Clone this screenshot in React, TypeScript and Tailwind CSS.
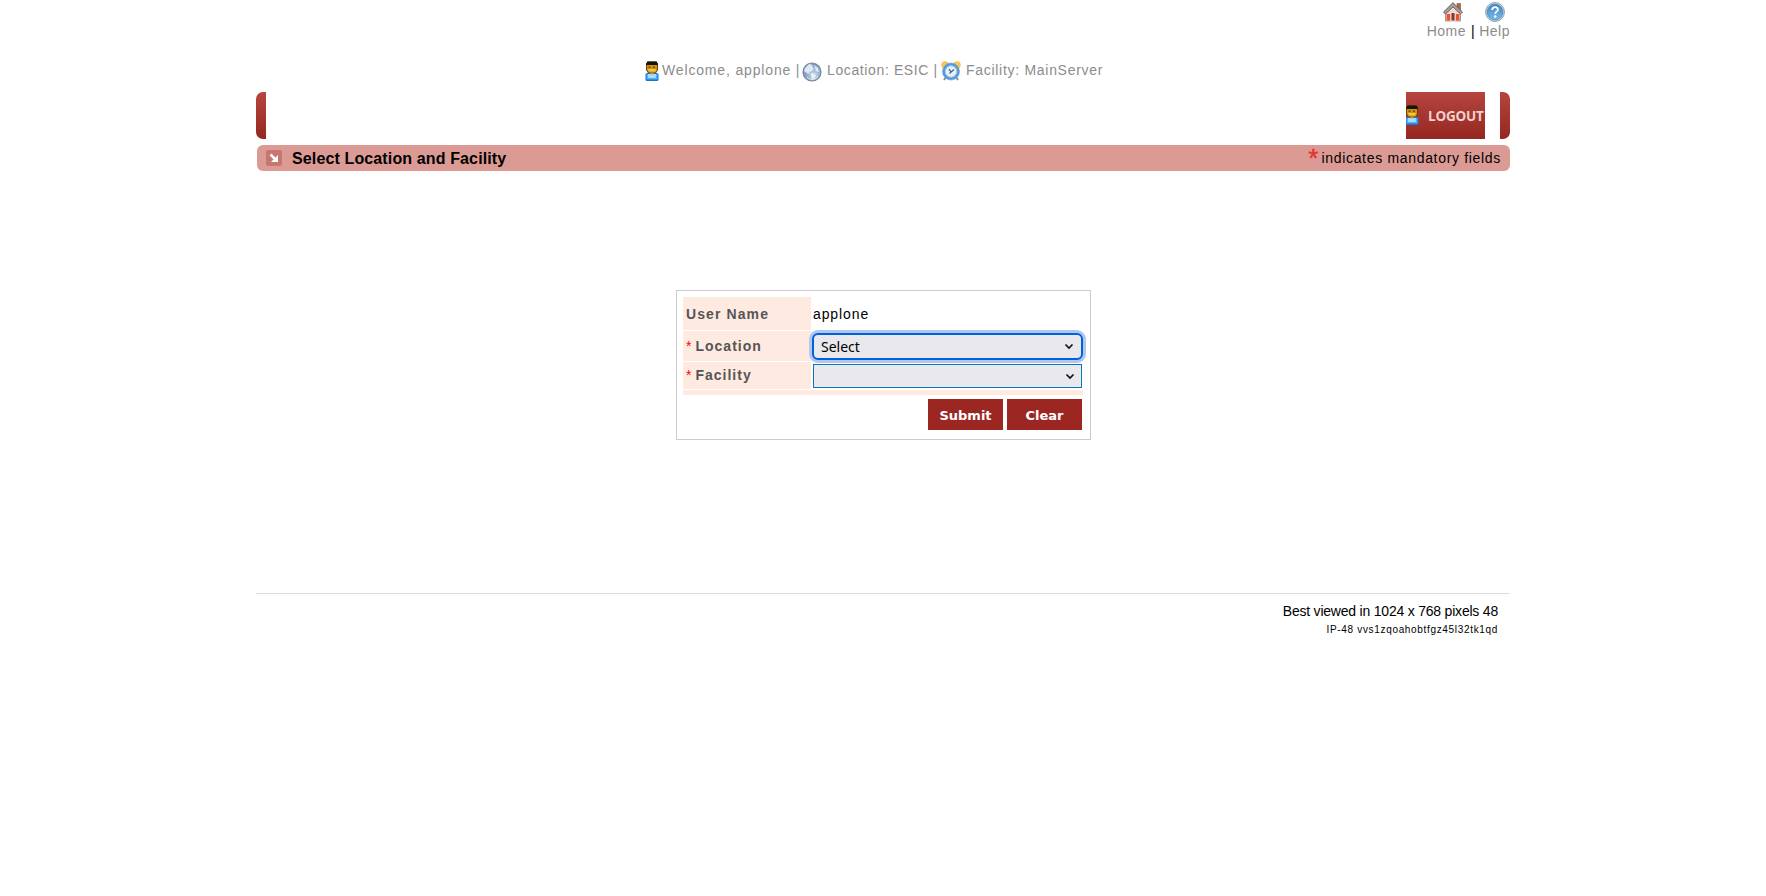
import React from 'react';

function UserIcon() {
  return (
    <svg width="14" height="20" viewBox="0 0 14 20" className="shrink-0">
      <path d="M1 3 2.500 .5h9L13 3v6l-2 3H3L1 9Z" fill="#6a4300" />
      <path d="M1 3 2.500 .5h9L13 3v1H1Z" fill="#171208" />
      <path d="M2 4h10v5l-1.500 2.500h-7L2 9Z" fill="#cf9210" />
      <path d="M3.500 5.500h2V7h-2ZM8 5.500h2V7H8Z" fill="#7d4e00" />
      <path d="M3 8h7.500v2.500H4Z" fill="#f9c63c" />
      <path d="M.5 13 2 12h10l1.500 1v6l-1 1h-11l-1-1Z" fill="#1675d3" />
      <path d="M1.500 13h11v5.500h-11Z" fill="#4dafff" />
      <path d="M3 13h8v4H3Z" fill="#a8dcff" />
      <path d="M5 11.500h4L7 14Z" fill="#d89b12" />
    </svg>
  );
}

function HomeIcon() {
  return (
    <svg width="20" height="20" viewBox="0 0 20 20">
      <path d="M2.500 10h15v9h-15Z" fill="#eeeae8" stroke="#8c8481" strokeWidth=".8" />
      <path d="M14 1.500h3.500V8L14 5Z" fill="#b5634e" stroke="#73514a" strokeWidth=".6" />
      <path d="m10 .7 9.500 9.300-2 2L10 5l-7.500 7-2-2Z" fill="#a99b96" stroke="#6d5f5a" strokeWidth="1" />
      <path d="m10 6 5.500 5v1h-11v-1Z" fill="#e8d8d2" />
      <path d="M3.500 12h4v6.500h-4ZM12.500 12h4v6.500h-4Z" fill="#ea5332" />
      <path d="M8 10.500h4V19H8Z" fill="#84382a" stroke="#fff" strokeWidth=".8" />
    </svg>
  );
}

function HelpIcon() {
  return (
    <svg width="20" height="20" viewBox="0 0 20 20">
      <defs>
        <linearGradient id="help" x2="0" y2="1">
          <stop stopColor="#4183bd" />
          <stop offset="1" stopColor="#79bcef" />
        </linearGradient>
      </defs>
      <circle cx="10" cy="10" r="9.400" fill="#c9d9e7" stroke="#7f9cb8" strokeWidth="1" />
      <circle cx="10" cy="10" r="7.800" fill="url(#help)" stroke="#4b7ca8" strokeWidth=".7" />
      <path d="M7.200 8c0-3.700 5.700-3.600 5.700-.4 0 2.100-2.700 2-2.700 4.200" fill="none" stroke="#fff" strokeWidth="1.800" />
      <circle cx="10.200" cy="14.500" r="1.200" fill="#fff" />
    </svg>
  );
}

function GlobeIcon() {
  return (
    <svg width="20" height="20" viewBox="0 0 20 20" className="mt-px shrink-0">
      <defs>
        <radialGradient id="globe" cx=".6" cy=".65" r=".65">
          <stop stopColor="#c5daf0" />
          <stop offset="1" stopColor="#7090b8" />
        </radialGradient>
      </defs>
      <circle cx="10" cy="10" r="9" fill="url(#globe)" stroke="#74879f" strokeWidth="1.200" />
      <path d="M3 6 7 2l4 1-1 2 2 1-2 3-3 1 1 2-3-1-3-2ZM12 3l4 3 1 4-3-1-1-3ZM9 11l4 1 1 2-3 4-2-3Z" fill="#eef4fa" opacity=".85" />
      <path d="M5 15.500c3 2.500 8 2.500 11-1" fill="none" stroke="#fff" opacity=".7" />
    </svg>
  );
}

function ClockIcon() {
  return (
    <svg width="20" height="20" viewBox="0 0 20 20" className="shrink-0">
      <path d="m5 16-2 3M15 16l2 3" stroke="#8b8e98" strokeWidth="2" />
      <circle cx="4" cy="4" r="3.400" fill="#ffc947" stroke="#eeb24a" strokeWidth=".6" />
      <circle cx="16" cy="4" r="3.400" fill="#ffc947" stroke="#eeb24a" strokeWidth=".6" />
      <circle cx="10" cy="10.500" r="8.500" fill="#5599dc" stroke="#6fa5d8" strokeWidth=".7" />
      <circle cx="10" cy="10.500" r="5.700" fill="#e5f1fc" stroke="#a7cbed" />
      <path d="m8 8 2 3 3-2.500M10 11l-1.500 1.500" fill="none" stroke="#53606e" strokeWidth="1.300" />
    </svg>
  );
}

function Chevron() {
  return (
    <svg width="10" height="7" viewBox="0 0 10 7">
      <path d="m1.500 1.500 3.500 3.500 3.500-3.500" fill="none" stroke="#111" strokeWidth="1.700" />
    </svg>
  );
}

export default function App() {
  return (
    <div className="min-h-[896px] bg-white font-['Liberation_Sans',sans-serif] text-black">
      <div className="mx-auto w-[1254px]">
        <header className="flex h-[92px] flex-col">
          <div className="flex h-[50px] justify-end gap-[5px] pt-[2px] text-[14px] leading-[18px] tracking-[0.5px] text-[#8c8c8c]">
            <a className="flex flex-col items-center">
              <span className="ml-[13px]"><HomeIcon /></span>
              <span>Home</span>
            </a>
            <span className="pt-[20px] text-black">|</span>
            <a className="-ml-px flex flex-col items-center">
              <HelpIcon />
              <span>Help</span>
            </a>
          </div>
          <div className="flex h-[41px] items-start pt-[11px] pl-[389px] text-[14px] leading-[18px] tracking-[0.71px] whitespace-nowrap text-[#8c8c8c]">
            <UserIcon />
            <span className="ml-[3px] w-[141px] tracking-[0.84px]">Welcome, applone |</span>
            <span className="-ml-px flex"><GlobeIcon /></span>
            <span className="ml-[5px] w-[114px] tracking-[0.62px]">Location: ESIC |</span>
            <ClockIcon />
            <span className="ml-[5px]">Facility: MainServer</span>
          </div>
        </header>

        <nav className="flex h-[47px] justify-between">
          <div className="w-[10px] rounded-l-[7px] bg-linear-to-b from-[#b5453e] to-[#962621]" />
          <div className="flex gap-[15px]">
            <button className="flex w-[79px] items-center overflow-hidden bg-linear-to-b from-[#b5453e] to-[#962621] font-['Open_Sans',sans-serif] text-[13.5px] font-bold tracking-[-0.2px] text-[#f0d3cf]">
              <span className="-mt-px -ml-px flex shrink-0"><UserIcon /></span>
              <span className="mt-px ml-[9px]">LOGOUT</span>
            </button>
            <div className="w-[10px] rounded-r-[7px] bg-linear-to-b from-[#b5453e] to-[#962621]" />
          </div>
        </nav>

        <div className="mt-[6px] ml-px flex h-[26px] items-center rounded-[6px] bg-[#dc9a94] pr-[9px] pl-[9px]">
          <svg width="16" height="16" viewBox="0 0 16 16">
            <rect width="16" height="16" rx="2" fill="#c77670" />
            <path d="m4 4.500 6 6M12 5v7H5l2.500-2.500 2-2Z" fill="#fff" />
            <path d="m4.500 4.500 5 5" stroke="#fff" strokeWidth="2.500" />
          </svg>
          <h1 className="mt-px ml-[10px] text-[16px] font-bold tracking-[0.13px]">Select Location and Facility</h1>
          <span className="ml-auto flex items-center text-[14px] tracking-[0.68px]">
            <span className="mr-[3px] h-[26px] text-[26px] leading-[26px] tracking-normal text-[#e0332d] [-webkit-text-stroke:0.4px_#e0332d]">*</span>
            <span className="mt-px">indicates mandatory fields</span>
          </span>
        </div>

        <main className="h-[422px] pt-[119px] pl-[420px]">
          <form className="h-[150px] w-[415px] border border-[#ccc] p-[6px] text-[14px]">
            <div className="grid w-[400px] grid-cols-[128px_272px] grid-rows-[33px_30px_27px_5px] gap-y-px font-bold tracking-[1px] text-[#555]">
              <label className="flex items-center bg-[#ffeae2] pt-[2px] pl-[3px] tracking-[1.1px]">User Name</label>
              <span className="flex items-center pt-[2px] pl-[2px] font-normal tracking-[0.9px] text-black">applone</span>
              <label className="flex items-center gap-[4px] bg-[#ffeae2] pl-[3px]">
                <span className="font-normal tracking-normal text-[#f00]">*</span>Location
              </label>
              <div className="flex items-center pl-px">
                <div className="flex h-[27px] w-[271px] shrink-0 items-center justify-between rounded-[6px] border-2 border-[#0060df] bg-[#e9e9ed] pr-[7px] pl-[7px] font-['Noto_Sans',sans-serif] font-normal tracking-[0px] text-black ring-3 ring-[#b0c8ee]">
                  Select <Chevron />
                </div>
              </div>
              <label className="flex items-center gap-[4px] bg-[#ffeae2] pl-[3px]">
                <span className="font-normal tracking-normal text-[#f00]">*</span>Facility
              </label>
              <div className="flex items-center pt-px pl-[2px]">
                <div className="flex h-[24px] w-[269px] items-center justify-end border border-[#0c77b8] bg-[#e9e9ed] pr-[6px]"><Chevron /></div>
              </div>
              <div className="col-span-2 bg-[#ffeae2]" />
            </div>
            <div className="mt-[4px] flex justify-end gap-[4px] pr-[2px] font-['DejaVu_Sans',sans-serif] text-[13px] font-bold text-white">
              <button type="button" className="h-[31px] w-[75px] bg-[#9c2722] pt-[2px]">Submit</button>
              <button type="button" className="h-[31px] w-[75px] bg-[#9c2722] pt-[2px]">Clear</button>
            </div>
          </form>
        </main>

        <footer className="border-t border-[#ddd] pt-[8px] pr-[12px] text-right">
          <p className="text-[14px] leading-[18px] tracking-[-0.21px]">Best viewed in 1024 x 768 pixels 48</p>
          <p className="text-[10px] leading-[20px] tracking-[0.67px]">IP-48 vvs1zqoahobtfgz45l32tk1qd</p>
        </footer>
      </div>
    </div>
  );
}
